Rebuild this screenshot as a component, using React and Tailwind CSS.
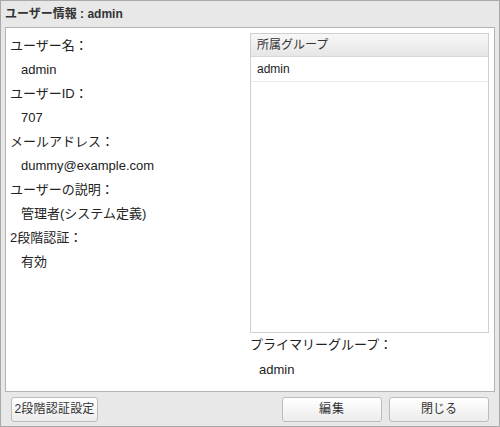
import React from 'react';

const font = { fontFamily: '"Liberation Sans", "Noto Sans CJK JP", sans-serif' };

const fields = [
    { label: 'ユーザー名：', value: 'admin' },
    { label: 'ユーザーID：', value: '707' },
    { label: 'メールアドレス：', value: 'dummy@example.com' },
    { label: 'ユーザーの説明：', value: '管理者(システム定義)' },
    { label: '2段階認証：', value: '有効' },
];

const Btn = ({ children, className = '' }) => (
    <button className={`h-[25px] px-0 whitespace-nowrap rounded-[3px] border border-[#bcbcbc] bg-gradient-to-b from-[#ffffff] to-[#ececec] text-[12px] text-[#333] ${className}`}>
        {children}
    </button>
);

const App = () => {
    return (
        <div style={font} className="w-[500px] h-[427px] bg-[#e8e8e8] border border-[#a9a9a9] flex flex-col text-[#222]">
            {/* Title */}
            <div className="h-[26px] px-[4px] flex items-center text-[12px] font-bold text-[#333]">
                ユーザー情報 : admin
            </div>

            {/* Body */}
            <div className="mx-[4px] h-[365px] bg-white border border-[#b7b1b1] flex">
                <div className="w-[244px] pl-[4px] pt-[6px] text-[13px] leading-[24px]">
                    {fields.map((f) => (
                        <div key={f.label}>
                            <div>{f.label}</div>
                            <div className="pl-[11px]">{f.value}</div>
                        </div>
                    ))}
                </div>

                <div className="flex-1 pr-[5px] pt-[5px] flex flex-col">
                    <div className="h-[300px] border border-[#cfcfcf] flex flex-col">
                        <div className="h-[23px] px-[6px] flex items-center text-[12px] text-[#333] bg-gradient-to-b from-[#f7f7f7] to-[#e6e6e6] border-b border-[#d6d6d6]">
                            所属グループ
                        </div>
                        <div className="h-[25px] px-[6px] flex items-center text-[12px] text-[#222] border-b border-[#ececec]">
                            admin
                        </div>
                    </div>
                    <div className="text-[13px] leading-[24px]">
                        <div>プライマリーグループ：</div>
                        <div className="pl-[9px] pt-[1px]">admin</div>
                    </div>
                </div>
            </div>

            {/* Footer */}
            <div className="flex-1 flex items-center px-[10px] gap-[7px]">
                <Btn className="w-[87px] tracking-[0.2px]">2段階認証設定</Btn>
                <div className="flex-1" />
                <Btn className="w-[100px] tracking-[1px]">編集</Btn>
                <Btn className="w-[100px]">閉じる</Btn>
            </div>
        </div>
    );
};

export default App;
